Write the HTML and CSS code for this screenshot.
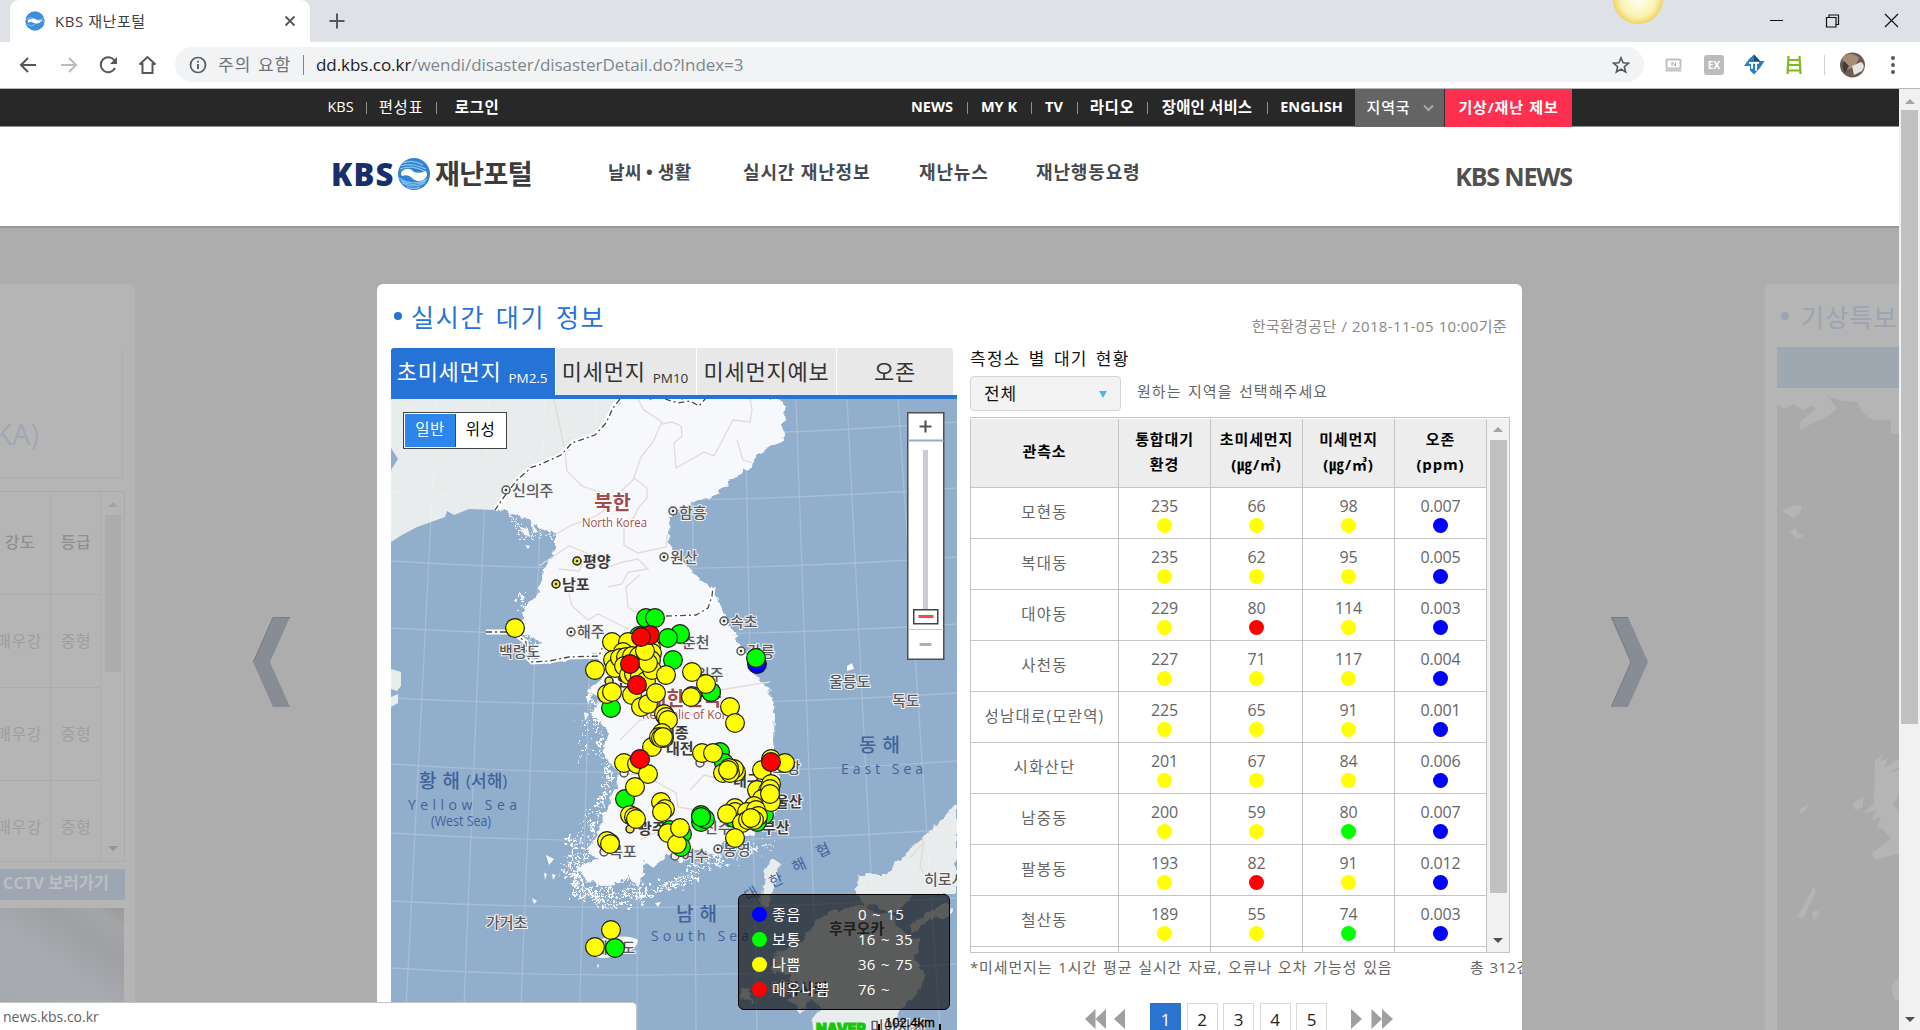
FILE: index.html
```html
<!DOCTYPE html>
<html lang="ko">
<head>
<meta charset="utf-8">
<title>KBS 재난포털</title>
<link rel="stylesheet" href="styles.css">
</head>
<body>
<div class="window">
  <header class="tabstrip">
    <div class="tab">
      <svg class="favicon" width="20" height="20" viewBox="0 0 20 20"><circle cx="10" cy="10" r="9.7" fill="#3d8fdd"/><path d="M1 9Q5 5 9 8T19 7M2 13Q7 17 11 12T19 11" stroke="#8fc3ee" fill="none"/><path d="M3 9Q8 6 12 9Q15 10 17 9Q14 14 9 12Q5 10 3 12Z" fill="#fff"/></svg>
      <span class="tab-title">KBS 재난포털</span>
      <svg class="tab-close" width="12" height="12" viewBox="0 0 12 12"><path d="M1.500 1.500l9 9m0-9l-9 9" stroke="#54585c" stroke-width="1.800"/></svg>
    </div>
    <svg class="newtab" width="16" height="16" viewBox="0 0 16 16"><path d="M8 .5v15M.5 8h15" stroke="#54585c" stroke-width="2"/></svg>
    <svg class="bulb" width="54" height="26" viewBox="0 0 54 26"><defs><radialGradient id="glow"><stop offset="0" stop-color="#fffef4"/><stop offset=".7" stop-color="#fbf3b4"/><stop offset="1" stop-color="#eed45f"/></radialGradient></defs><circle cx="27" cy="-1" r="25" fill="url(#glow)"/></svg>
    <svg class="winbtn" width="140" height="20" viewBox="0 0 140 20"><path d="M4 10.500h13M119 4l13 13m0-13l-13 13" stroke="#111" fill="none" stroke-width="1.200"/><path d="M60.500 7.500h9.500v9.500h-9.500zM63 7.500v-2.500h9.500v9.500h-2.500" stroke="#111" fill="none" stroke-width="1.200"/></svg>
  </header>
  <div class="toolbar">
    <svg class="navicons" width="150" height="24" viewBox="0 0 150 24"><g fill="none" stroke="#54585c" stroke-width="2"><path d="M28 12H13m7-7l-7 7 7 7"/><path d="M53 12h15m-7-7l7 7-7 7" stroke="#b9bbbe"/><path d="M106.500 7.500A7.500 7.500 0 1 0 107 15"/><path d="M134 11h3v9h10v-9h3M134 11.500l8-7.500 8 7.500" transform="translate(-2.500 0)"/></g><path d="M109 4v7h-7z" fill="#54585c"/></svg>
    <div class="omnibox">
      <svg width="18" height="18" viewBox="0 0 18 18"><circle cx="9" cy="9" r="7.500" fill="none" stroke="#5a5e62" stroke-width="1.700"/><path d="M9 8v5M9 4.700v1.900" stroke="#5a5e62" stroke-width="1.900"/></svg>
      <span class="warn">주의 요함</span><i class="omni-sep"></i>
      <span class="url"><b>dd.kbs.co.kr</b>/wendi/disaster/disasterDetail.do?Index=3</span>
      <svg class="star" width="18" height="18" viewBox="0 0 18 18"><path d="M9 1.800l2.100 5 5.300.4-4.100 3.500 1.300 5.300L9 13.100 4.400 16l1.300-5.300L1.600 7.200l5.300-.4z" fill="none" stroke="#54585c" stroke-width="1.600"/></svg>
    </div>
    <svg class="exts" width="260" height="32" viewBox="0 0 260 32">
      <rect x="12.500" y="10.500" width="14" height="9" rx="1" fill="none" stroke="#c2c2c2" stroke-width="2"/><path d="M11.500 21.500h16" stroke="#c2c2c2" stroke-width="2"/><path d="M18 17v-4l3.500 4v-4" stroke="#aaa" fill="none"/>
      <rect x="50" y="6" width="20" height="20" rx="3" fill="#bcbcbc"/><text x="60" y="20" class="ext-label">EX</text>
      <path d="M100 5.500l6 6.500h4.500l-4.500 7-6 6.500-4-4v-4.500h-6l5-7z" fill="#2a7fc4"/><path d="M95 13h10v1.800h-2v7h-2v-7h-2v5h-2v-5h-2z" fill="#fff"/><path d="M100 5.500l6 6.500h-6z" fill="#144d86"/>
      <path d="M134.500 7l-1 18M145.500 7l1 18M134 11h12M134 16h12M133 21.500h14" stroke="#83b81a" stroke-width="2.200"/>
      <path d="M170.500 6v20" stroke="#cfd1d3"/>
      <circle cx="198.500" cy="16" r="12.500" fill="#6d5b52"/><path d="M188 9q8-8 17 0l-4 8-8 4z" fill="#a78d78"/><path d="M198 17l9-4q5 3 1 9l-8 4z" fill="#e4e6e4"/><path d="M190 12l5 5-4 7q-4-6-1-12" fill="#403a38"/>
      <circle cx="239" cy="9" r="2" fill="#54585c"/><circle cx="239" cy="16" r="2" fill="#54585c"/><circle cx="239" cy="23" r="2" fill="#54585c"/>
    </svg>
  </div>

  <div class="viewport">
    <div class="page">
      <div class="topbar">
        <span class="w25">KBS</span><i></i><span class="w44 ko">편성표</span><i></i><span class="w44 login ko">로그인</span>
        <div class="topbar-right">
          <b class="w44">NEWS</b><i></i><b class="w40">MY K</b><i></i><b class="w20">TV</b><i></i><b class="w46 ko">라디오</b><i></i><b class="w96 ko">장애인 서비스</b><i></i><b class="w64">ENGLISH</b>
          <span class="region">지역국<svg width="11" height="8" viewBox="0 0 11 8"><path d="M1 1.500l4.500 4.500L10 1.500" fill="none" stroke="#a8a8a8" stroke-width="2"/></svg></span><span class="report">기상/재난 제보</span>
        </div>
      </div>
      <div class="masthead">
        <div class="logo"><span class="logo-kbs">KBS</span>
          <svg width="34" height="34" viewBox="0 0 34 34"><circle cx="17" cy="17" r="16" fill="#2d83d2"/><path d="M6 6q10-4 20 2M4 9q10-4 25 3M3 12q12-5 26 3M2 21q13 9 28 1M4 24q12 7 25 0M5 26q11 6 23 0M10 30q7 3 13 0" stroke="#8dc1ea" fill="none" stroke-width="1.200"/><path d="M5 14q7-5 12 1 6 2 12-1 3 6-3 9-7 3-12-3-4-3-9-1-2-2 0-5z" fill="#fff"/></svg>
          <span class="logo-name">재난포털</span></div>
        <nav class="gnb"><a class="g1">날씨 • 생활</a><a class="g2">실시간 재난정보</a><a class="g3">재난뉴스</a><a class="g4">재난행동요령</a></nav>
        <div class="kbsnews">KBS NEWS</div>
      </div>

      <main class="stage">
        <section class="ghost ghost-left">
          <div class="quake">KA)</div>
          <div class="mag">
            <div class="mag-grid"><b>강도</b><b>등급</b><span>매우강</span><span>중형</span><span>매우강</span><span>중형</span><span>매우강</span><span>중형</span></div>
            <div class="mag-scroll"><em class="up"></em><u></u><em class="down"></em></div>
          </div>
          <div class="cctv">CCTV 보러가기</div>
          <div class="photo"></div>
        </section>
        <svg class="arrow arrow-left" width="37" height="90" viewBox="0 0 37 90"><path d="M0 45L20 0H37L17 45 37 90H20Z" fill="#888d95"/><path d="M37 .5H20L.5 45" fill="none" stroke="#777b81"/></svg>

        <section class="card">
          <div class="card-head"><h1><i></i>실시간 대기 정보</h1><p>한국환경공단 / 2018-11-05 10:00기준</p></div>
          <div class="cols">
            <div class="map-col">
              <div class="pm-tabs"><div class="on t1">초미세먼지<small>PM2.5</small></div><div class="t2">미세먼지<small>PM10</small></div><div class="t3">미세먼지예보</div><div class="t4">오존</div></div>
              <div class="map">
<svg class="map-art" width="566" height="631" viewBox="391 399 566 631">
<defs><filter id="coast" x="-5%" y="-5%" width="110%" height="110%"><feTurbulence type="fractalNoise" baseFrequency=".13" numOctaves="2" seed="4"/><feDisplacementMap in="SourceGraphic" scale="9" xChannelSelector="R" yChannelSelector="G"/></filter><filter id="isles" x="-10%" y="-10%" width="120%" height="120%"><feTurbulence type="fractalNoise" baseFrequency=".22" numOctaves="2" seed="9"/><feDisplacementMap in="SourceGraphic" scale="26" xChannelSelector="R" yChannelSelector="G"/></filter></defs>
<rect x="391" y="399" width="566" height="631" fill="#91aecd"/>
<path d="M391 399H620L613 408 606 423 595 435 572 443 561 455 539 465 532 467 517 480 504 497 495 510 469 509 454 515 447 511 445 517 417 527 402 535 391 542V470L398 459 391 448Z" fill="#e9ecec"/>
<path d="M391 669l10 3v14l-4 5-6-2zM391 697l7-3v9l-7 4z" fill="#e9ecec"/>
<path d="M620 398H778L786 406 783 423 784 442 772 444 757 457 750 468 728 482 726 488 709 498 691 502 685 508 670 518 669 533 670 547 685 563 698 577 711 587 717 600 726 617 735 637 744 650 753 670 763 683 772 697 775 717 774 740 772 750 781 762 777 780 778 800 775 817 767 827 750 835 737 837 723 843 717 857 700 850 690 850 683 862 668 855 654 867 645 862 639 887 628 875 620 883 602 887 587 880 576 867 598 860 587 850 598 833 602 820 609 807 613 793 620 773 609 763 602 753 609 733 600 720 591 715 598 705 602 697 587 693 591 687 602 680 598 653 580 657 560 661 543 661 532 655 539 640 520 633 522 617 526 607 539 593 543 570 556 547 556 533 539 528 526 518 509 513 495 510 504 497 517 480 532 467 539 465 561 455 572 443 595 435 606 423 613 408Z" fill="#f7f8fb" filter="url(#coast)"/>
<g fill="none" stroke="#f7f8fb" filter="url(#isles)"><path d="M590 695l6 20 6 40 8 20-8 30-8 24-6 20-12 30 20 20 30 6 24-14 20-4 20-8 12-14 22-4 26-12 20-4" stroke-width="5" stroke-dasharray="5 4 3 6 7 3"/><path d="M584 722l2 40M590 810l-12 30-14 30 16 22 34 16 26-8 20-14 26-10 24-18 22-6" stroke-width="3" stroke-dasharray="3 6 5 8 2 5"/><path d="M572 840l6 60M600 880l40-6M590 892l60 2M583 870l56 10" stroke-width="5" stroke-dasharray="7 3 4 3"/><path d="M512 516l14 22 28-6M520 595l8 24-4 20 20 16" stroke-width="4" stroke-dasharray="5 4 3 4"/></g>
<path d="M592 950q5-13 20-13 20-2 26 3-1 10-17 14-16 6-25 3zM520 527l8 2 2 8-6-3zM532 524l6 8-5 1zM525 545l5 1-2 3zM520 594l5 3-3 4zM533 612l4 2-3 3zM546 855l8 4-5 6zM552 874l4 1-3 5zM602 904l3 3-3 3zM655 903l6-1-3 5zM532 898l5 3-3 3zM544 873l3 1-2 6zM586 696l5 2-3 6zM584 712l5 2-4 7zM847 666l5-3 2 6-7 2zM597 965l2-1-1 5z" fill="#f7f8fb"/>
<path d="M957 802L940 822 927 833 902 857 887 875 859 875 857 893 864 905 880 915 900 910 913 895 957 895ZM936 908l8-4 8 3-7 12-9-3zM910 926l24-18 3 5-24 20zM831 913l19-6 24-2 17 9 10 14 17 13-3 20 12 17-15 21-12 12-6 15-13 15H813l-3-20 10-12-8-10-12 14-12-14 8-10-7-15-18-3 8-17 14-9 11-5 8-16zM772 860q8-2 6 12l-10 35-8-5 6-34zM742 989l8-1 4 14-16-5zM778 950l8 6-5 10-8-7zM790 935l8 5-8 5z" fill="#e9ecec" filter="url(#coast)"/>
<path d="M437 399L405 1030M489 399L463 1030M545 399L520 1030M597 399L579 1030M639 399L637 1030M692 399L696 1030M745 399L757 1030M796 399L818 1030M847 399L879 1030M898 399L940 1030M391 427Q650 446 957 422M391 492Q650 510 957 488M391 561Q650 578 957 557M391 628Q650 643 957 624M391 698Q650 712 957 693M391 764Q650 782 957 761M391 833Q650 850 957 829M391 901Q650 915 957 898M391 968Q650 984 957 964" fill="none" stroke="#fff" stroke-opacity=".2" stroke-width="1.300"/>
<g fill="none" stroke="#e1dad8" stroke-width="1.300"><path d="M554 399l11 52 2 20 15 15 20 7 16 7-22 16-26 10-17 10M618 494l15-14 8-23 12-15 9-20-18-12-8-14M662 424l10-2 9 4 1 10-8 7 2 25 16-9 12-7 10 4 9-17 10-19 17 2 2-12-4-22M737 440l6 20 10 3M634 478l13 10v10l-8 9-5 10-10 8v20l14 8 28-6 1-12M539 566l30-20 18 7-8 18-20-2M585 560l20 8 18-6 15-3 10 10-20 3-6 12-14 3M568 590l4 16 16 14 10-6 30 15M640 575l-14 12 2 20 25 16M690 660l30 30 50-8M620 740l20-20 30-4 19 24 8 24 12-3M620 773l24 2 32 18 2 14 18 3M690 790l14-15 30 8 14 5 20-3M640 840l32-15 35 4M660 720l20-9 20 6M910 858l14-16-4 25 5 8"/></g>
<path d="M620 399l-7 9-7 15-11 12-23 8-11 12-22 10-7 2-15 13-13 17-9 13M665 399l13 4 12-2 9 5 7-8M486 632h26l14 10v14l6 6 17-1 20-4 30-1 3-8M666 616l30-1 12-7 4-12 1-9" fill="none" stroke="#fff" stroke-width="5"/>
<path d="M620 399l-7 9-7 15-11 12-23 8-11 12-22 10-7 2-15 13-13 17-9 13M665 399l13 4 12-2 9 5 7-8M486 632h26l14 10v14l6 6 17-1 20-4 30-1 3-8M666 616l30-1 12-7 4-12 1-9" fill="none" stroke="#4a4a4a" stroke-width="1.300" stroke-dasharray="6 3 2 3"/>
<g class="town"><g fill="#f5f1e8" stroke="#555" stroke-width="1.500"><circle cx="506" cy="490" r="4"/><circle cx="673" cy="511" r="4"/><circle cx="664" cy="557" r="4"/><circle cx="571" cy="632" r="4"/><circle cx="724" cy="621" r="4"/><circle cx="741" cy="651" r="4"/><circle cx="718" cy="849" r="4"/><circle cx="675" cy="856" r="4"/><circle cx="604" cy="852" r="4"/><circle cx="700" cy="763" r="4"/><circle cx="624" cy="773" r="4"/></g><g fill="#f0e64c" stroke="#222" stroke-width="1.500"><circle cx="577" cy="561" r="4"/><circle cx="556" cy="584" r="4"/><circle cx="609" cy="681" r="4"/><circle cx="630" cy="829" r="4"/></g>
<g fill="#333"><circle cx="506" cy="490" r="1.300"/><circle cx="673" cy="511" r="1.300"/><circle cx="664" cy="557" r="1.300"/><circle cx="571" cy="632" r="1.300"/><circle cx="724" cy="621" r="1.300"/><circle cx="741" cy="651" r="1.300"/><circle cx="577" cy="561" r="1.300"/><circle cx="556" cy="584" r="1.300"/><circle cx="718" cy="849" r="1.300"/></g>
<text x="512" y="496">신의주</text><text x="679" y="518">함흥</text><text x="670" y="563">원산</text><text x="577" y="637">해주</text><text x="730" y="627">속초</text><text x="747" y="657">강릉</text><text x="499" y="657">백령도</text><text x="682" y="648">춘천</text><text x="696" y="680">원주</text><text x="829" y="687">울릉도</text><text x="892" y="706">독도</text><text x="486" y="928">가거초</text><text x="609" y="857">목포</text><text x="681" y="861">여수</text><text x="723" y="855">통영</text><text x="704" y="833">진주</text><text x="594" y="953">제주도</text><text x="924" y="885">히로시마</text><text x="870" y="1032">미야자키</text><text x="773" y="773">포항</text></g>
<g class="town city"><text x="583" y="567">평양</text><text x="562" y="590">남포</text><text x="617" y="686">인천</text><text x="661" y="738">세종</text><text x="666" y="754">대전</text><text x="638" y="834">광주</text><text x="733" y="786">대구</text><text x="775" y="807">울산</text><text x="762" y="833">부산</text><text x="829" y="934">후쿠오카</text><text x="772" y="994">나가사키</text></g>
<g class="nation"><text x="594" y="510" class="big">북한</text><text x="582" y="527" textLength="65" lengthAdjust="spacingAndGlyphs">North Korea</text><text x="648" y="706" class="big">대한민국</text><text x="642" y="719" textLength="98" lengthAdjust="spacingAndGlyphs">Republic of Korea</text></g>
<g class="sea"><text x="419" y="788" class="sea-ko" textLength="41">황 해</text><text x="466" y="787" class="sea-sub">(서해)</text><text x="408" y="810" class="sea-en" textLength="109">Yellow Sea</text><text x="431" y="826" class="sea-west" textLength="60" lengthAdjust="spacingAndGlyphs">(West Sea)</text><text x="859" y="752" class="sea-ko" textLength="41">동 해</text><text x="841" y="774" class="sea-en" textLength="82">East Sea</text><text x="676" y="921" class="sea-ko" textLength="41">남 해</text><text x="651" y="941" class="sea-en" textLength="98">South Sea</text><text transform="translate(748 902) rotate(-30)">대</text><text transform="translate(772 888) rotate(-25)">한</text><text transform="translate(795 873) rotate(-25)">해</text><text transform="translate(819 858) rotate(-25)">협</text></g>
<g class="pins">
<g class="g"><circle cx="646" cy="618" r="9"/><circle cx="655" cy="618" r="9"/><circle cx="639" cy="636" r="9"/><circle cx="680" cy="634" r="9"/><circle cx="668" cy="638" r="9"/><circle cx="673" cy="660" r="9"/><circle cx="711" cy="692" r="9"/><circle cx="611" cy="708" r="9"/><circle cx="625" cy="799" r="9"/><circle cx="720" cy="752" r="9"/><circle cx="724" cy="763" r="9"/></g><circle class="b" cx="757" cy="664" r="9"/><circle class="g" cx="756" cy="658" r="9"/>
<g class="y"><circle cx="612" cy="642" r="9"/><circle cx="628" cy="642" r="9"/><circle cx="595" cy="670" r="9"/><circle cx="613" cy="660" r="9"/><circle cx="615" cy="668" r="9"/><circle cx="623" cy="652" r="9"/><circle cx="620" cy="658" r="9"/><circle cx="626" cy="657" r="9"/><circle cx="632" cy="656" r="9"/><circle cx="639" cy="656" r="9"/><circle cx="651" cy="648" r="9"/><circle cx="652" cy="653" r="9"/><circle cx="651" cy="660" r="9"/><circle cx="624" cy="666" r="9"/><circle cx="634" cy="666" r="9"/><circle cx="642" cy="667" r="9"/><circle cx="629" cy="675" r="9"/><circle cx="634" cy="674" r="9"/><circle cx="640" cy="676" r="9"/><circle cx="646" cy="681" r="9"/><circle cx="652" cy="670" r="9"/><circle cx="648" cy="663" r="9"/><circle cx="645" cy="651" r="9"/><circle cx="666" cy="675" r="9"/><circle cx="692" cy="672" r="9"/></g><circle class="g" cx="711" cy="692" r="9"/><g class="y"><circle cx="706" cy="684" r="9"/><circle cx="692" cy="696" r="9"/><circle cx="691" cy="697" r="9"/><circle cx="607" cy="694" r="9"/><circle cx="612" cy="692" r="9"/><circle cx="632" cy="695" r="9"/><circle cx="641" cy="707" r="9"/><circle cx="648" cy="704" r="9"/><circle cx="656" cy="693" r="9"/><circle cx="664" cy="714" r="9"/><circle cx="666" cy="717" r="9"/><circle cx="668" cy="720" r="9"/><circle cx="730" cy="707" r="9"/><circle cx="735" cy="723" r="9"/><circle cx="652" cy="747" r="9"/><circle cx="662" cy="733" r="9"/><circle cx="659" cy="737" r="9"/><circle cx="664" cy="738" r="9"/><circle cx="661" cy="738" r="9"/><circle cx="663" cy="737" r="9"/><circle cx="624" cy="763" r="9"/><circle cx="637" cy="764" r="9"/><circle cx="648" cy="774" r="9"/><circle cx="635" cy="787" r="9"/><circle cx="702" cy="753" r="9"/><circle cx="713" cy="753" r="9"/><circle cx="723" cy="773" r="9"/><circle cx="736" cy="772" r="9"/><circle cx="734" cy="769" r="9"/><circle cx="730" cy="773" r="9"/><circle cx="729" cy="768" r="9"/><circle cx="728" cy="770" r="9"/><circle cx="661" cy="802" r="9"/><circle cx="665" cy="809" r="9"/><circle cx="662" cy="812" r="9"/><circle cx="630" cy="815" r="9"/><circle cx="634" cy="817" r="9"/><circle cx="636" cy="819" r="9"/><circle cx="762" cy="770" r="9"/><circle cx="771" cy="759" r="9"/><circle cx="785" cy="763" r="9"/></g>
<g class="r"><circle cx="650" cy="635" r="9"/><circle cx="641" cy="637" r="9"/><circle cx="630" cy="664" r="9"/><circle cx="637" cy="685" r="9"/><circle cx="640" cy="759" r="9"/><circle cx="771" cy="762" r="9"/></g>
<g class="g"><circle cx="701" cy="822" r="9"/><circle cx="705" cy="819" r="9"/><circle cx="701" cy="815" r="9"/><circle cx="701" cy="817" r="9"/><circle cx="670" cy="830" r="9"/><circle cx="682" cy="834" r="9"/><circle cx="681" cy="847" r="9"/><circle cx="764" cy="815" r="9"/><circle cx="757" cy="822" r="9"/><circle cx="734" cy="818" r="9"/><circle cx="610" cy="843" r="9"/></g>
<g class="y"><circle cx="668" cy="833" r="9"/><circle cx="677" cy="844" r="9"/><circle cx="680" cy="828" r="9"/><circle cx="607" cy="841" r="9"/><circle cx="610" cy="844" r="9"/><circle cx="735" cy="808" r="9"/><circle cx="735" cy="812" r="9"/><circle cx="727" cy="814" r="9"/><circle cx="757" cy="790" r="9"/><circle cx="771" cy="784" r="9"/><circle cx="768" cy="791" r="9"/><circle cx="762" cy="799" r="9"/><circle cx="771" cy="802" r="9"/><circle cx="754" cy="806" r="9"/><circle cx="747" cy="812" r="9"/><circle cx="742" cy="823" r="9"/><circle cx="756" cy="810" r="9"/><circle cx="758" cy="816" r="9"/><circle cx="748" cy="820" r="9"/><circle cx="754" cy="820" r="9"/><circle cx="751" cy="818" r="9"/><circle cx="770" cy="789" r="9"/><circle cx="770" cy="794" r="9"/><circle cx="735" cy="838" r="9"/><circle cx="515" cy="628" r="9"/><circle cx="611" cy="930" r="9"/><circle cx="595" cy="947" r="9"/></g><circle class="g" cx="615" cy="948" r="9"/>
</g>
<text x="816" y="1034" class="naver">NAVER</text>
</svg>
                <div class="maptype"><b>일반</b><span>위성</span></div>
                <div class="zoomer"><svg width="38" height="248" viewBox="0 0 38 248"><rect x=".75" y=".75" width="36" height="246.500" fill="#fff" stroke="#4e4e4e" stroke-width="1.500"/><path d="M1.500 28.500h35" stroke="#91aecd" stroke-width="2"/><path d="M1.500 217.500h35" stroke="#ccc"/><path d="M18.500 8.500v12M12.500 14.500h12" stroke="#555" stroke-width="2.200"/><path d="M18.500 38v160" stroke="#c9ccd2" stroke-width="5"/><rect x="6.750" y="197.750" width="24" height="14" fill="#fff" stroke="#444" stroke-width="1.500"/><path d="M11.500 204.500h15" stroke="#f04a50" stroke-width="3"/><path d="M12.500 232.500h12" stroke="#b0b0b0" stroke-width="3"/></svg></div>
                <ul class="legend"><li><i class="b"></i><span>좋음</span>0 ~ 15</li><li><i class="g"></i><span>보통</span>16 ~ 35</li><li><i class="y"></i><span>나쁨</span>36 ~ 75</li><li><i class="r"></i><span>매우나쁨</span>76 ~</li></ul>
                <div class="scale">102.4km</div>
              </div>
            </div>
            <div class="list-col">
              <h2>측정소 별 대기 현황</h2>
              <div class="filter"><div class="select">전체<i></i></div><span>원하는 지역을 선택해주세요</span></div>
              <div class="tbl">
                <table>
                  <thead><tr><th class="c1">관측소</th><th>통합대기<br>환경</th><th>초미세먼지<br>(㎍/㎥)</th><th>미세먼지<br>(㎍/㎥)</th><th>오존<br>(ppm)</th></tr></thead>
                  <tbody>
                    <tr><td>모현동</td><td>235<i class="y"></i></td><td>66<i class="y"></i></td><td>98<i class="y"></i></td><td>0.007<i class="b"></i></td></tr>
                    <tr><td>복대동</td><td>235<i class="y"></i></td><td>62<i class="y"></i></td><td>95<i class="y"></i></td><td>0.005<i class="b"></i></td></tr>
                    <tr><td>대야동</td><td>229<i class="y"></i></td><td>80<i class="r"></i></td><td>114<i class="y"></i></td><td>0.003<i class="b"></i></td></tr>
                    <tr><td>사천동</td><td>227<i class="y"></i></td><td>71<i class="y"></i></td><td>117<i class="y"></i></td><td>0.004<i class="b"></i></td></tr>
                    <tr><td>성남대로(모란역)</td><td>225<i class="y"></i></td><td>65<i class="y"></i></td><td>91<i class="y"></i></td><td>0.001<i class="b"></i></td></tr>
                    <tr><td>시화산단</td><td>201<i class="y"></i></td><td>67<i class="y"></i></td><td>84<i class="y"></i></td><td>0.006<i class="b"></i></td></tr>
                    <tr><td>남중동</td><td>200<i class="y"></i></td><td>59<i class="y"></i></td><td>80<i class="g"></i></td><td>0.007<i class="b"></i></td></tr>
                    <tr><td>팔봉동</td><td>193<i class="y"></i></td><td>82<i class="r"></i></td><td>91<i class="y"></i></td><td>0.012<i class="b"></i></td></tr>
                    <tr><td>철산동</td><td>189<i class="y"></i></td><td>55<i class="y"></i></td><td>74<i class="g"></i></td><td>0.003<i class="b"></i></td></tr>
                    <tr><td></td><td></td><td></td><td></td><td></td></tr>
                  </tbody>
                </table>
                <div class="tbl-scroll"><em class="up"></em><u></u><em class="down"></em></div>
              </div>
              <div class="note"><span>*미세먼지는 1시간 평균 실시간 자료, 오류나 오차 가능성 있음</span><span class="total">총 312건</span></div>
              <div class="pager">
                <svg width="65" height="20" viewBox="0 0 65 20"><path d="M10.500 0v20L0 10zM21 0v20L10.500 10zM40 0v20L29 10z" fill="#a0a0a0"/></svg>
                <div class="pages"><b>1</b><span>2</span><span>3</span><span>4</span><span>5</span></div>
                <svg width="43" height="20" viewBox="0 0 43 20"><path d="M0 0v20L11 10zM20.500 0v20L31 10zM31 0v20L42 10z" fill="#a0a0a0"/></svg>
              </div>
            </div>
          </div>
        </section>

        <svg class="arrow arrow-right" width="37" height="90" viewBox="0 0 37 90"><path d="M37 45L17 0H0L20 45 0 90H17Z" fill="#888d95"/><path d="M17 .5H.5L20 45 .5 89.500" fill="none" stroke="#777b81"/></svg>
        <section class="ghost ghost-right">
          <h3><i></i>기상특보</h3>
          <div class="band"></div>
          <svg width="122" height="642" viewBox="0 0 122 642"><rect width="122" height="642" fill="#aaa"/><path d="M0 0H122V46H114V32H98Q84 28 81 14L66 13 50 8 60 20Q50 30 40 33L22 42 24 33 38 22Q38 14 26 22L16 16 8 21 0 17ZM5 123l12-6 8 1-2 7-7 5zM13 144l5-4 3 5 6 3-7 3zM23 524l14-26q4 3-3 16l-8 16-6-2zM35 524q6-2 8 0l-6 9zM22 422l9-6-2 6-5 4zM98 372l8-6-3 8 8-4-4 10 15-9v8l-10 6 10-3v25l-7 10 7 5v44l-24 5-4-5 20-15-8-10-6-2 4-10-10 3 6-9-14 2 11-9zM76 415l10-6v10l-8 3zM122 590q-12 6-4 22h4z" fill="#b5b5b5"/></svg>
        </section>
      </main>
    </div>
    <div class="scrollbar"><em class="up"></em><u></u><em class="down"></em></div>
  </div>
  <div class="status">news.kbs.co.kr</div>
</div>
</body>
</html>
```
FILE: styles.css
```css
* { box-sizing: border-box; }
body { margin: 0; overflow: hidden; font-family: "Open Sans", "Noto Sans CJK KR", sans-serif; color: #222; }
h1, h2, h3, p, ul { margin: 0; padding: 0; font-weight: 400; }
svg { display: block; flex: none; }
.window { position: relative; width: 1920px; height: 1030px; display: flex; flex-direction: column; overflow: hidden; background: #fff; }

/* browser chrome */
.tabstrip { height: 42px; flex: none; display: flex; align-items: center; padding-left: 10px; background: #dee1e6; }
.tab { width: 300px; height: 42px; display: flex; align-items: center; padding: 0 14px 0 15px; background: #fff; border-radius: 9px 9px 0 0; }
.tab-title { margin: -2px 0 0 10px; font-size: 15px; letter-spacing: .55px; color: #3c4043; white-space: nowrap; }
.tab-close { margin-left: auto; }
.newtab { margin-left: 19px; }
.bulb { margin: 0 101px 0 auto; align-self: flex-start; }
.winbtn { margin-right: 14px; margin-top: -3px; }
.toolbar { height: 47px; flex: none; display: flex; align-items: center; padding: 0 0 1px 8px; border-bottom: 1px solid #b6b6b6; }
.navicons { margin: 0 17px 0 0; }
.omnibox { width: 1469px; height: 35px; display: flex; align-items: center; padding: 0 14px; background: #f1f3f4; border-radius: 18px; font-size: 17px; white-space: nowrap; }
.warn { width: 78px; margin: -3px 0 0 11px; color: #70757a; letter-spacing: 1.1px; word-spacing: 1px; }
.omni-sep { width: 1px; height: 20px; margin: 0 12px 0 7px; background: #80868b; }
.url { color: #80868b; font-family: "Open Sans", sans-serif; font-size: 17px; letter-spacing: -.05px; }
.url b { font-weight: 400; color: #202124; }
.star { margin-left: auto; }
.exts { margin-left: 10px; }
.ext-label { font: bold 10px "Open Sans", sans-serif; fill: #fff; text-anchor: middle; }

.viewport { flex: 1; min-height: 0; display: flex; }
.page { width: 1899px; display: flex; flex-direction: column; overflow: hidden; }
.up, .down { display: block; border: 5px solid transparent; width: 0; height: 0; }
.up { border-top: 0; border-bottom-color: #a3a3a3; }
.down { border-bottom: 0; border-top-color: #505050; }
.scrollbar { width: 21px; display: flex; flex-direction: column; align-items: center; padding: 10px 0 8px; background: #f1f1f1; }
.scrollbar u { width: 17px; height: 614px; margin: 6px 0 auto; background: #c1c1c1; }

/* site header */
.topbar { height: 38px; flex: none; display: flex; align-items: center; padding: 0 327px 0 328px; background: #282828; color: #fff; font-size: 14.500px; border-bottom: 1px solid #8e8e8e; }
.topbar > span, .topbar b { flex: none; display: flex; justify-content: center; align-items: center; height: 38px; padding-bottom: 3px; white-space: nowrap; }
.topbar i { width: 1px; height: 12px; margin: 0 12px 0 13px; background: #8d8d8d; }
.topbar .w25 { width: 25px; } .topbar .w44 { width: 44px; } .topbar .w40 { width: 38px; } .topbar .w20 { width: 20px; }
.topbar .w46 { width: 44px; } .topbar .w96 { width: 94px; } .topbar .w64 { width: 63px; }
.topbar .ko { font-size: 15.500px; letter-spacing: .5px; word-spacing: 0; }
.topbar .w96 { letter-spacing: .1px; }
.topbar .login { margin-left: 6px; font-weight: 700; }
.topbar-right { margin-left: auto; display: flex; align-items: center; height: 38px; }
.region, .report { height: 38px; display: flex; align-items: center; justify-content: center; padding-bottom: 3px; font-size: 15px; white-space: nowrap; font-weight: 500; }
.region { width: 90px; margin-left: 12px; gap: 13px; background: #646464; border-right: 1px solid #333; letter-spacing: .8px; padding-left: 2px; }
.region svg { margin-top: 3px; }
.report { width: 127px; background: #ff2f50; letter-spacing: .75px; word-spacing: 1px; font-weight: 700; }
.masthead { height: 101px; flex: none; display: flex; align-items: center; padding: 0 327px 6px 331px; border-bottom: 2px solid #999; }
.logo { width: 277px; display: flex; align-items: center; }
.logo-kbs { width: 66px; font: 800 31px/34px "Open Sans", sans-serif; letter-spacing: 1.2px; color: #17306b; margin-top: 1px; }
.logo-name { margin-left: 4px; font-size: 27px; line-height: 34px; font-weight: 700; letter-spacing: -.6px; color: #3c3c3c; white-space: nowrap; }
.gnb { display: flex; font-size: 18px; font-weight: 700; color: #45494f; margin-top: -5px; }
.gnb a { display: block; white-space: nowrap; letter-spacing: .85px; }
.gnb .g1 { width: 135px; letter-spacing: .1px; } .g2 { width: 176px; } .g3 { width: 117px; } .g4 { width: 150px; }
.kbsnews { margin-left: auto; margin-top: 5px; font: 700 25px/30px "Open Sans", sans-serif; letter-spacing: -1.150px; color: #505050; white-space: nowrap; }

/* stage */
.stage { flex: 1; min-height: 0; display: flex; padding-top: 56px; background: #adadad; }
.arrow { margin-top: 333px; }
.arrow-left { margin-left: 118px; margin-right: 87px; }
.arrow-right { margin-left: 89px; margin-right: 117px; }
.ghost { flex: none; background: #b5b5b5; color: #9c9c9c; overflow: hidden; }
.ghost-left { width: 135px; border-radius: 0 6px 0 0; }
.quake { height: 131px; width: 123px; margin-top: 63px; border: solid #aeaeae; border-width: 0 1px 1px 0; padding: 67px 83px 0 0; font-size: 29px; color: #a0a8b4; display: flex; justify-content: flex-end; line-height: 40px; }
.mag { width: 125px; height: 371px; margin-top: 13px; border: 1px solid #aaa; border-left: 0; display: flex; font-size: 16px; }
.mag-grid { width: 102px; display: grid; grid-template-columns: 51px 51px; grid-template-rows: 103px 93px 93px 93px; letter-spacing: .5px; border-right: 1px solid #acacac; overflow: hidden; }
.mag-grid > * { display: flex; align-items: center; justify-content: center; border: solid #acacac; border-width: 0 1px 1px 0; white-space: nowrap; padding-bottom: 3px; }
.mag-grid > b { color: #8e8e8e; font-weight: 500; padding-bottom: 5px; }
.mag-grid > b:first-child { padding-left: 0; padding-right: 10px; }
.mag-grid > span:nth-child(odd) { justify-content: flex-end; padding-right: 8px; }
.mag-grid > span { color: #9e9e9e; }
.mag-scroll { width: 23px; display: flex; flex-direction: column; align-items: center; padding: 10px 0; }
.mag-scroll u { width: 16px; height: 157px; margin: 8px 0 auto; background: #acacac; }
.mag-scroll .down { border-top-color: #949494; }
.mag-scroll .up { border-bottom-color: #a3a3a3; }
.cctv { width: 125px; height: 31px; margin: 7px 0 8px; padding-right: 16px; display: flex; justify-content: flex-end; font-size: 16.500px; line-height: 28px; font-weight: 700; background: #9ea6b3; color: #bcbec1; white-space: nowrap; }
.photo { width: 124px; height: 130px; background: linear-gradient(35deg, #a4a8b0, #a8abb1 50%, #9fa0a3 75%, #a4a5a7 90%, #999); }
.ghost-right { width: 134px; border-radius: 6px 0 0 0; padding-left: 12px; }
.ghost-right h3 { height: 63px; display: flex; align-items: center; gap: 12px; padding-left: 4px; font-size: 25px; letter-spacing: 1.2px; color: #9aa4b3; white-space: nowrap; }
.ghost-right h3 i { width: 8px; height: 8px; border-radius: 50%; background: #9aa4b3; flex: none; }
.band { height: 41px; background: #9fa7b0; }

/* main card */
.card { width: 1145px; flex: none; background: #fff; border-radius: 6px 6px 0 0; overflow: hidden; }
.card-head { height: 64px; display: flex; justify-content: space-between; padding: 0 15px 0 17px; }
.card h1 { display: flex; align-items: center; gap: 9px; height: 64px; font-size: 25px; letter-spacing: 1.7px; word-spacing: 2.500px; color: #2573d6; white-space: nowrap; }
.card h1 i { width: 8px; height: 8px; border-radius: 50%; background: #2573d6; }
.card-head p { margin-top: 31px; font-size: 15px; line-height: 22px; letter-spacing: .35px; word-spacing: .6px; color: #888; white-space: nowrap; }
.cols { display: flex; padding-left: 14px; }
.map-col { width: 566px; flex: none; }
.pm-tabs { height: 51px; display: flex; gap: 1px; border-bottom: 4px solid #2573d6; font-size: 22px; }
.pm-tabs div { height: 47px; padding-bottom: 4px; background: #e8e8e8; color: #333; display: flex; align-items: center; justify-content: center; letter-spacing: .75px; white-space: nowrap; }
.pm-tabs small { font-size: 13.500px; margin: 16px 0 0 7px; letter-spacing: -.1px; }
.pm-tabs .t1 { width: 164px; border-radius: 3px 0 0 0; padding-right: 2px; } .pm-tabs .t2 { width: 140px; padding-right: 2px; } .pm-tabs .t3 { width: 139px; } .pm-tabs .t4 { width: 116px; border-radius: 0 3px 0 0; }
.pm-tabs .on { background: #2573d6; color: #fff; }
.map { position: relative; height: 631px; overflow: hidden; }
.town text { font: 500 15px "Noto Sans CJK KR", sans-serif; fill: #58595c; stroke: #f4f4f4; stroke-width: 2px; paint-order: stroke; }
.city text { font-weight: 700; fill: #3b3b3d; }
.nation { font: 500 13px "Open Sans", "Noto Sans CJK KR", sans-serif; fill: #a04c50; stroke: #fff; stroke-width: 2px; paint-order: stroke; }
.nation .big { font-size: 20px; font-weight: 700; }
.sea { fill: #41639a; font: 15px "Open Sans", "Noto Sans CJK KR", sans-serif; }
.sea-ko { font-size: 19px; font-weight: 500; }
.sea-sub { font-size: 17px; font-weight: 500; }
.sea-en { font-size: 14px; }
.sea-west { font-size: 14px; }
.pins circle { r: 9.400px; stroke: #1c1c1c; stroke-width: 1.200px; }
.pins .y, .pins .y circle { fill: #ff0; } .pins .g, .pins .g circle { fill: #0f0; } .pins .r circle { fill: #f00; } .pins .b { fill: #00f; }
.naver { font: 900 14px Inter, sans-serif; fill: #16c60c; stroke: #16c60c; }
.maptype { position: absolute; left: 12px; top: 13px; width: 104px; height: 37px; display: flex; padding: 1px; background: #fff; border: 1px solid #444; font-size: 15.500px; letter-spacing: .6px; line-height: 31px; text-align: center; }
.maptype b { width: 51px; font-weight: 400; background: #2c86ec; color: #fff; border-right: 1px solid #444; }
.maptype span { flex: 1; color: #000; }
.zoomer { position: absolute; left: 516px; top: 13px; }
.legend { position: absolute; left: 347px; top: 495px; width: 212px; height: 116px; padding: 6px 13px; list-style: none; background: rgba(15,15,15,.66); border: 1px solid #000; border-radius: 6px; color: #fff; font-size: 15px; word-spacing: 1.500px; letter-spacing: .15px; }
.legend li { display: flex; align-items: center; height: 25px; white-space: nowrap; }
.legend i { width: 15px; height: 15px; margin: 2px 5px 0 0; border-radius: 50%; }
.legend span { width: 86px; letter-spacing: .8px; }
i.y { background: #ff0; } i.g { background: #0f0; } i.r { background: #f00; } i.b { background: #00f; }
.scale { position: absolute; left: 487px; top: 616px; width: 63px; padding-left: 7px; font: 13px/15px "Liberation Sans", sans-serif; -webkit-text-stroke: .3px #000; color: #000; background: linear-gradient(#000, #000) 0 9px / 2px 10px no-repeat, linear-gradient(#000, #000) 100% 9px / 2px 10px no-repeat; }

.list-col { margin-left: 13px; width: 552px; }
.list-col h2 { height: 28px; padding-top: 1px; line-height: 20px; font-size: 17px; letter-spacing: 1.250px; word-spacing: 2.500px; color: #111; white-space: nowrap; }
.filter { display: flex; align-items: center; height: 35px; }
.filter > span { margin: -6px 0 0 16px; font-size: 15px; letter-spacing: 1.050px; word-spacing: 1.500px; color: #666; white-space: nowrap; }
.select { width: 151px; height: 35px; display: flex; align-items: center; justify-content: space-between; padding: 0 13px 2px; background: #f3f3f3; border: 1px solid #d5d5d5; border-radius: 4px; font-size: 17px; letter-spacing: .8px; color: #111; }
.select i { border: 4px solid transparent; border-top: 7px solid #4db5e8; border-bottom: 0; margin-top: 3px; }
.tbl { width: 540px; height: 536px; margin-top: 6px; padding-top: 1px; border: 1px solid #c4c4c4; border-left: 0; display: flex; overflow: hidden; }
table { width: 517px; height: 578px; border-collapse: collapse; table-layout: fixed; font-size: 15px; flex: none; }
th, td { border: 1px solid #c4c4c4; padding: 0; text-align: center; line-height: 25px; }
th { height: 68px; padding-bottom: 2px; background: #ededed; color: #000; font-weight: 700; font-size: 15px; width: 92px; letter-spacing: .85px; white-space: nowrap; }
thead th { border-top: 0; }
th.c1 { width: 148px; }
td { height: 51px; color: #666; font-size: 16px; letter-spacing: -.2px; line-height: 18px; padding-top: 4px; }
td:first-child { font-size: 15.500px; letter-spacing: 1.200px; padding: 0 0 1px; }
td i { display: block; width: 15px; height: 15px; margin: 3px auto 0; border-radius: 50%; }
.tbl-scroll { width: 22px; display: flex; flex-direction: column; align-items: center; padding: 8px 0 9px; background: #f1f1f1; }
.tbl-scroll u { width: 17px; height: 453px; margin: 8px 0 auto; background: #c1c1c1; }
.note { height: 50px; display: flex; justify-content: space-between; padding-top: 3px; font-size: 15px; line-height: 22px; color: #666; white-space: nowrap; letter-spacing: .85px; word-spacing: 1.200px; }
.total { width: 52px; overflow: hidden; letter-spacing: .3px; }
.pager { display: flex; padding-left: 115px; }
.pager > svg { margin-top: 6px; }
.pages { display: flex; gap: 5.500px; margin-right: 24px; font-size: 17px; text-align: center; line-height: 31px; }
.pages b, .pages span { width: 31px; height: 32px; border: 1px solid #d9d9d9; }
.pages b { background: #2b74d0; border-color: #2b74d0; color: #fff; font-weight: 400; }

/* link target shown in the window's lower left corner */
.status { position: absolute; left: 0; top: 1002px; width: 637px; height: 28px; padding-left: 3px; background: #fff; border: solid #c4c4c4; border-width: 1px 1px 0 0; border-radius: 0 5px 0 0; font-size: 14px; line-height: 28px; color: #5f6368; }
```
